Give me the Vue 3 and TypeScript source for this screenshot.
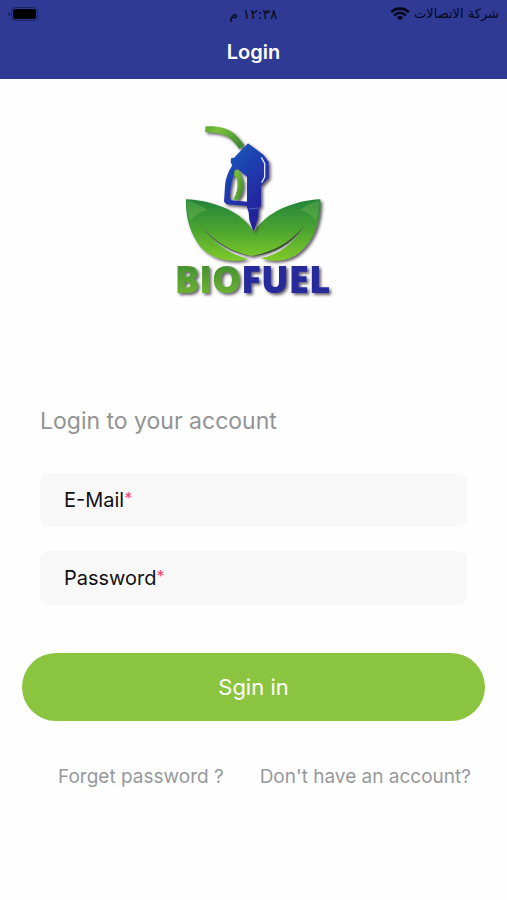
<script setup lang="ts">
import { reactive } from 'vue'

interface Field {
  id: 'email' | 'password'
  label: string
  type: string
  autocomplete: string
}

const fields: Field[] = [
  { id: 'email', label: 'E-Mail', type: 'email', autocomplete: 'email' },
  { id: 'password', label: 'Password', type: 'password', autocomplete: 'current-password' },
]

const form = reactive({ email: '', password: '' })
</script>

<template>
  <div class="screen">
    <header class="header">
      <div class="status" dir="rtl" lang="ar">
        <div class="carrier">
          <span>شركة الاتصالات</span>
          <svg class="wifi" viewBox="0 0 20 14" aria-hidden="true">
            <path d="M1.2 5.2a12.5 12.5 0 0 1 17.6 0" />
            <path d="M4.2 8.3a8.2 8.2 0 0 1 11.6 0" />
            <path class="wifi-dot" d="M10 13.6 6.9 10.5a4.5 4.5 0 0 1 6.2 0z" />
          </svg>
        </div>
        <time>١٢:٣٨ م</time>
        <div class="power">
          <svg class="battery" viewBox="0 0 30 14" aria-hidden="true">
            <rect class="battery-shell" x="3.5" y="0.5" width="26" height="13" rx="4" />
            <rect x="5" y="2" width="23" height="10" rx="2.5" />
            <path class="battery-tip" d="M2 5V9Q0 8.500 0 7T2 5z" />
          </svg>
        </div>
      </div>
      <h1>Login</h1>
    </header>

    <main class="content">
      <svg class="logo" viewBox="0 0 525 570" role="img" aria-label="Biofuel">
        <defs>
          <linearGradient id="leaf" x1="0" y1="0" x2="0" y2="1">
            <stop offset="0" stop-color="#23833a" />
            <stop offset="0.5" stop-color="#4ba52f" />
            <stop offset="1" stop-color="#80ca2b" />
          </linearGradient>
          <linearGradient id="body" x1="0" y1="0" x2="0.5" y2="1">
            <stop offset="0" stop-color="#1660ba" />
            <stop offset="0.5" stop-color="#2039ad" />
            <stop offset="1" stop-color="#211f98" />
          </linearGradient>
          <linearGradient id="hose" x1="0" y1="0" x2="1" y2="0.6">
            <stop offset="0" stop-color="#54a52c" />
            <stop offset="0.3" stop-color="#79c238" />
            <stop offset="1" stop-color="#438c35" />
          </linearGradient>
          <linearGradient id="bio" x1="0" y1="0" x2="0" y2="1">
            <stop offset="0" stop-color="#36842f" />
            <stop offset="1" stop-color="#79bd31" />
          </linearGradient>
          <filter id="shade" x="-10%" y="-10%" width="125%" height="125%">
            <feDropShadow dx="6" dy="6" stdDeviation="4" flood-color="#302838" flood-opacity="0.75" />
          </filter>
        </defs>

        <g filter="url(#shade)">
          <path
            fill="url(#leaf)"
            d="M60 253C145 257 231 291 263 352C300 291 382 257 463 253C466 312 446 372 406 407C374 437 328 444 284 430C343 418 388 378 413 335C367 387 315 412 257 423C197 412 148 382 109 336C138 378 190 419 247 432C205 444 142 438 103 395C72 358 58 304 60 253z"
          />
        </g>
        <path class="sheen" d="M62 256C83 262 106 271 123 286C102 291 86 302 73 316C65 294 62 274 62 256z" />
        <path class="sheen" d="M461 256C440 262 419 271 401 286C422 291 438 301 450 315C458 294 461 274 461 256z" />
        <path class="vein" d="M109 336C148 382 197 412 257 423C199 416 146 386 109 336z" />
        <path class="vein" d="M257 423C315 412 367 387 413 335C375 391 319 418 257 423z" />

        <g filter="url(#shade)">
          <path fill="url(#hose)" d="M119 34C154 32 184 38 204 55C215 65 225 78 235 91L221 103C206 83 193 67 174 60C156 53 139 52 117 52z" />
          <path
            fill="url(#body)"
            fill-rule="evenodd"
            d="M246 85L292 119L308 141L308 188L285 213L285 273L278 281L277 307L263 351L250 315L248 292L242 273L182 268L174 260L177 214Q179 180 199 151L194 142L195 130L204 128zM212 160Q194 193 192 248L196 256L243 260L243 185z"
          />
          <path fill="url(#hose)" d="M203 180L207 164L219 167L224 178C236 201 236 232 217 254L201 254C217 228 217 205 210 183z" />
        </g>
        <path class="glint" d="M286 127L296 145V186L287 203" />
        <path class="groove" d="M249 282L276 279" />

        <g class="wordmark" filter="url(#shade)">
          <text x="26" y="534"><tspan fill="url(#bio)">BIO</tspan><tspan fill="#252c9b">FUEL</tspan></text>
        </g>
      </svg>

      <form class="form" @submit.prevent>
        <h2>Login to your account</h2>
        <div class="fields">
          <div v-for="field in fields" :key="field.id" class="field">
            <label :for="field.id">{{ field.label }}<span class="required">*</span></label>
            <input
              :id="field.id"
              v-model="form[field.id]"
              :type="field.type"
              :autocomplete="field.autocomplete"
              required
            />
          </div>
        </div>
        <button type="submit">Sgin in</button>
      </form>

      <nav class="links">
        <a href="#forgot">Forget password ?</a>
        <a href="#register">Don't have an account?</a>
      </nav>
    </main>
  </div>
</template>

<style>
body {
  margin: 0;
  background: #fefefe;
}
</style>

<style scoped>
.screen {
  min-height: 100vh;
  font-family: Inter, "Liberation Sans", sans-serif;
  color: #111;
}

.header {
  padding-bottom: 7px;
  background: #2e3a94;
}

.status {
  display: grid;
  grid-template-columns: 1fr auto 1fr;
  align-items: center;
  padding: 0 8px;
  font-family: "DejaVu Sans", sans-serif;
  font-size: 14px;
  line-height: 28px;
  color: #06081a;
}

.carrier {
  display: flex;
  align-items: center;
  gap: 4px;
  font-size: 13px;
}

.power {
  display: flex;
  justify-content: flex-end;
}

.wifi {
  width: 20px;
  height: 14px;
  fill: none;
  stroke: #06081a;
  stroke-width: 2.6;
}

.wifi .wifi-dot {
  fill: #06081a;
  stroke: none;
}

.battery {
  width: 30px;
  height: 14px;
  fill: #000;
}

.battery .battery-shell {
  fill: none;
  stroke: #1c2462;
}

.battery .battery-tip {
  fill: #1c2462;
}

h1 {
  margin: 0;
  padding-top: 4px;
  font-size: 20px;
  font-weight: 600;
  line-height: 40px;
  text-align: center;
  color: #fff;
}

.content {
  display: flex;
  flex-direction: column;
  padding: 36px 22px;
}

.logo {
  align-self: center;
  width: 175px;
  height: 190px;
}

.sheen {
  fill: #a9db72;
  fill-opacity: 0.22;
}

.vein {
  fill: #35552c;
}

.glint {
  fill: none;
  stroke: #dce7fb;
  stroke-width: 4;
}

.groove {
  fill: none;
  stroke: #5662bd;
  stroke-width: 3;
}

.wordmark {
  font-family: "Open Sans", sans-serif;
  font-size: 110px;
  font-weight: 800;
}

.form {
  display: flex;
  flex-direction: column;
  padding-top: 100px;
}

h2 {
  margin: 0 18px;
  font-size: 23px;
  font-weight: 400;
  line-height: 32px;
  color: #929395;
}

.fields {
  display: flex;
  flex-direction: column;
  gap: 24px;
  margin: 36px 18px 48px;
}

.field {
  display: flex;
  align-items: center;
  height: 54px;
  padding: 0 24px;
  border-radius: 8px;
  background: #f8f8f8;
  font-size: 20px;
}

.required {
  font-size: 16px;
  vertical-align: text-top;
  color: #f0476c;
}

input {
  flex: 1;
  min-width: 0;
  height: 100%;
  padding: 0 8px;
  border: 0;
  outline: 0;
  background: transparent;
  font: inherit;
  color: inherit;
}

button {
  height: 68px;
  border: 0;
  border-radius: 34px;
  background: #8bc53f;
  font: inherit;
  font-size: 22px;
  color: #fff;
  cursor: pointer;
}

.links {
  display: flex;
  justify-content: space-between;
  padding: 42px 14px 0 36px;
  font-size: 19px;
  line-height: 28px;
}

.links a {
  color: #96999c;
  text-decoration: none;
}
</style>
